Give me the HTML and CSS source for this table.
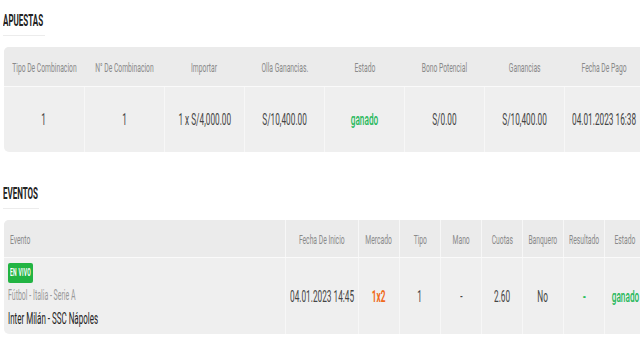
FILE: index.html
```html
<!DOCTYPE html>
<html lang="es">
<head>
<meta charset="utf-8">
<title>Apuestas</title>
<link rel="stylesheet" href="styles.css">
</head>
<body>
<main class="page">
  <h2 class="title title-apuestas"><span class="t">APUESTAS</span></h2>
  <div class="table table-bets">
    <div class="row head">
      <div class="cell"><span class="t">Tipo De Combinacion</span></div>
      <div class="cell"><span class="t">N° De Combinacion</span></div>
      <div class="cell"><span class="t">Importar</span></div>
      <div class="cell"><span class="t">Olla Ganancias.</span></div>
      <div class="cell"><span class="t">Estado</span></div>
      <div class="cell"><span class="t">Bono Potencial</span></div>
      <div class="cell"><span class="t">Ganancias</span></div>
      <div class="cell"><span class="t">Fecha De Pago</span></div>
    </div>
    <div class="row body bets-body">
      <div class="cell"><span class="t">1</span></div>
      <div class="cell"><span class="t">1</span></div>
      <div class="cell"><span class="t">1 x S/4,000.00</span></div>
      <div class="cell"><span class="t">S/10,400.00</span></div>
      <div class="cell"><span class="t won">ganado</span></div>
      <div class="cell"><span class="t">S/0.00</span></div>
      <div class="cell"><span class="t">S/10,400.00</span></div>
      <div class="cell"><span class="t">04.01.2023 16:38</span></div>
    </div>
  </div>

  <h2 class="title title-eventos"><span class="t">EVENTOS</span></h2>
  <div class="table table-events">
    <div class="row head">
      <div class="cell cell-event"><span class="t tl">Evento</span></div>
      <div class="cell"><span class="t">Fecha De Inicio</span></div>
      <div class="cell"><span class="t">Mercado</span></div>
      <div class="cell"><span class="t">Tipo</span></div>
      <div class="cell"><span class="t">Mano</span></div>
      <div class="cell"><span class="t">Cuotas</span></div>
      <div class="cell"><span class="t">Banquero</span></div>
      <div class="cell"><span class="t">Resultado</span></div>
      <div class="cell"><span class="t">Estado</span></div>
    </div>
    <div class="row body events-body">
      <div class="cell cell-event">
        <div class="event-info">
          <span class="badge"><span class="t tl badge-text">EN VIVO</span></span>
          <span class="t tl league">Fútbol - Italia - Serie A</span>
          <span class="t tl match">Inter Milán - SSC Nápoles</span>
        </div>
      </div>
      <div class="cell"><span class="t">04.01.2023 14:45</span></div>
      <div class="cell"><span class="t market">1x2</span></div>
      <div class="cell"><span class="t">1</span></div>
      <div class="cell"><span class="t">-</span></div>
      <div class="cell"><span class="t">2.60</span></div>
      <div class="cell"><span class="t">No</span></div>
      <div class="cell"><span class="t dash-green">-</span></div>
      <div class="cell"><span class="t won">ganado</span></div>
    </div>
  </div>
</main>
</body>
</html>
```

FILE: styles.css
```css
* { box-sizing: border-box; }

html, body {
  margin: 0;
  padding: 0;
  background: #ffffff;
}

body {
  font-family: Roboto, "Liberation Sans", sans-serif;
  color: #3c3c3c;
  width: 640px;
  height: 351px;
  overflow: hidden;
}

.page {
  padding: 0 0 0 4px;
  width: 640px;
  overflow: hidden;
}

.t {
  display: inline-block;
  white-space: nowrap;
  transform: scaleX(0.5);
  transform-origin: 50% 50%;
}

.tl {
  transform-origin: 0 50%;
}

.title {
  margin: 0 0 0 -1px;
  font-size: 16px;
  line-height: 20px;
  font-weight: 700;
  color: #222;
  border-bottom: 1px solid #ececec;
  padding-bottom: 4px;
}

.title .t {
  transform-origin: 0 50%;
}

.title-apuestas {
  padding-top: 11px;
  width: 42px;
}

.title-eventos {
  margin-top: 32px;
  width: 36px;
}

.table {
  border-radius: 5px;
  background: #efefef;
  width: 660px;
}

.table-bets {
  margin-top: 11px;
}

.table-events {
  margin-top: 11px;
}

.row {
  display: flex;
}

.head {
  background: #ebebeb;
  border-bottom: 1px solid #fafafa;
  border-radius: 5px 0 0 0;
}

.body {
  border-radius: 0 0 0 5px;
}

.table-bets .head { height: 40px; }
.bets-body { height: 65px; }

.table-events .head { height: 38px; }
.events-body { height: 76px; }

.cell {
  display: flex;
  align-items: center;
  justify-content: center;
  flex: 0 0 auto;
  overflow: visible;
  border-left: 1px solid #f7f7f7;
}

.cell:first-child {
  border-left: none;
}

.head .cell {
  font-size: 13.5px;
  color: #8a8a8a;
}

.body .cell {
  font-size: 16.5px;
  color: #454545;
}

.table-bets .cell {
  width: 80px;
}

.table-bets .head .cell {
  border-left-color: #ebebeb;
}

.table-events .cell {
  width: 41px;
}

.table-events .cell:nth-child(2) {
  width: 73px;
}

.table-events .cell.cell-event {
  width: 281px;
  justify-content: flex-start;
  padding-left: 6px;
}

.events-body .cell.cell-event {
  align-items: flex-start;
  padding-left: 4px;
  padding-top: 5px;
}

.event-info {
  display: flex;
  flex-direction: column;
  align-items: flex-start;
}

.badge {
  display: block;
  width: 25px;
  height: 20px;
  background: #22b443;
  border-radius: 2px;
  padding: 5px 0 0 2px;
  line-height: 10px;
}

.badge-text {
  display: block;
  font-size: 10px;
  font-weight: 700;
  color: #ffffff;
  letter-spacing: 0.6px;
}

.league {
  margin-top: 5px;
  font-size: 14px;
  line-height: 15px;
  color: #9a9a9a;
}

.match {
  margin-top: 7px;
  font-size: 16px;
  line-height: 18px;
  color: #222222;
  font-weight: 400;
}

.won {
  color: #1fb85a;
  font-weight: 500;
}

.market {
  color: #f06a1a;
  font-weight: 700;
}

.dash-green {
  color: #2bbf5d;
  font-weight: 700;
}
```
